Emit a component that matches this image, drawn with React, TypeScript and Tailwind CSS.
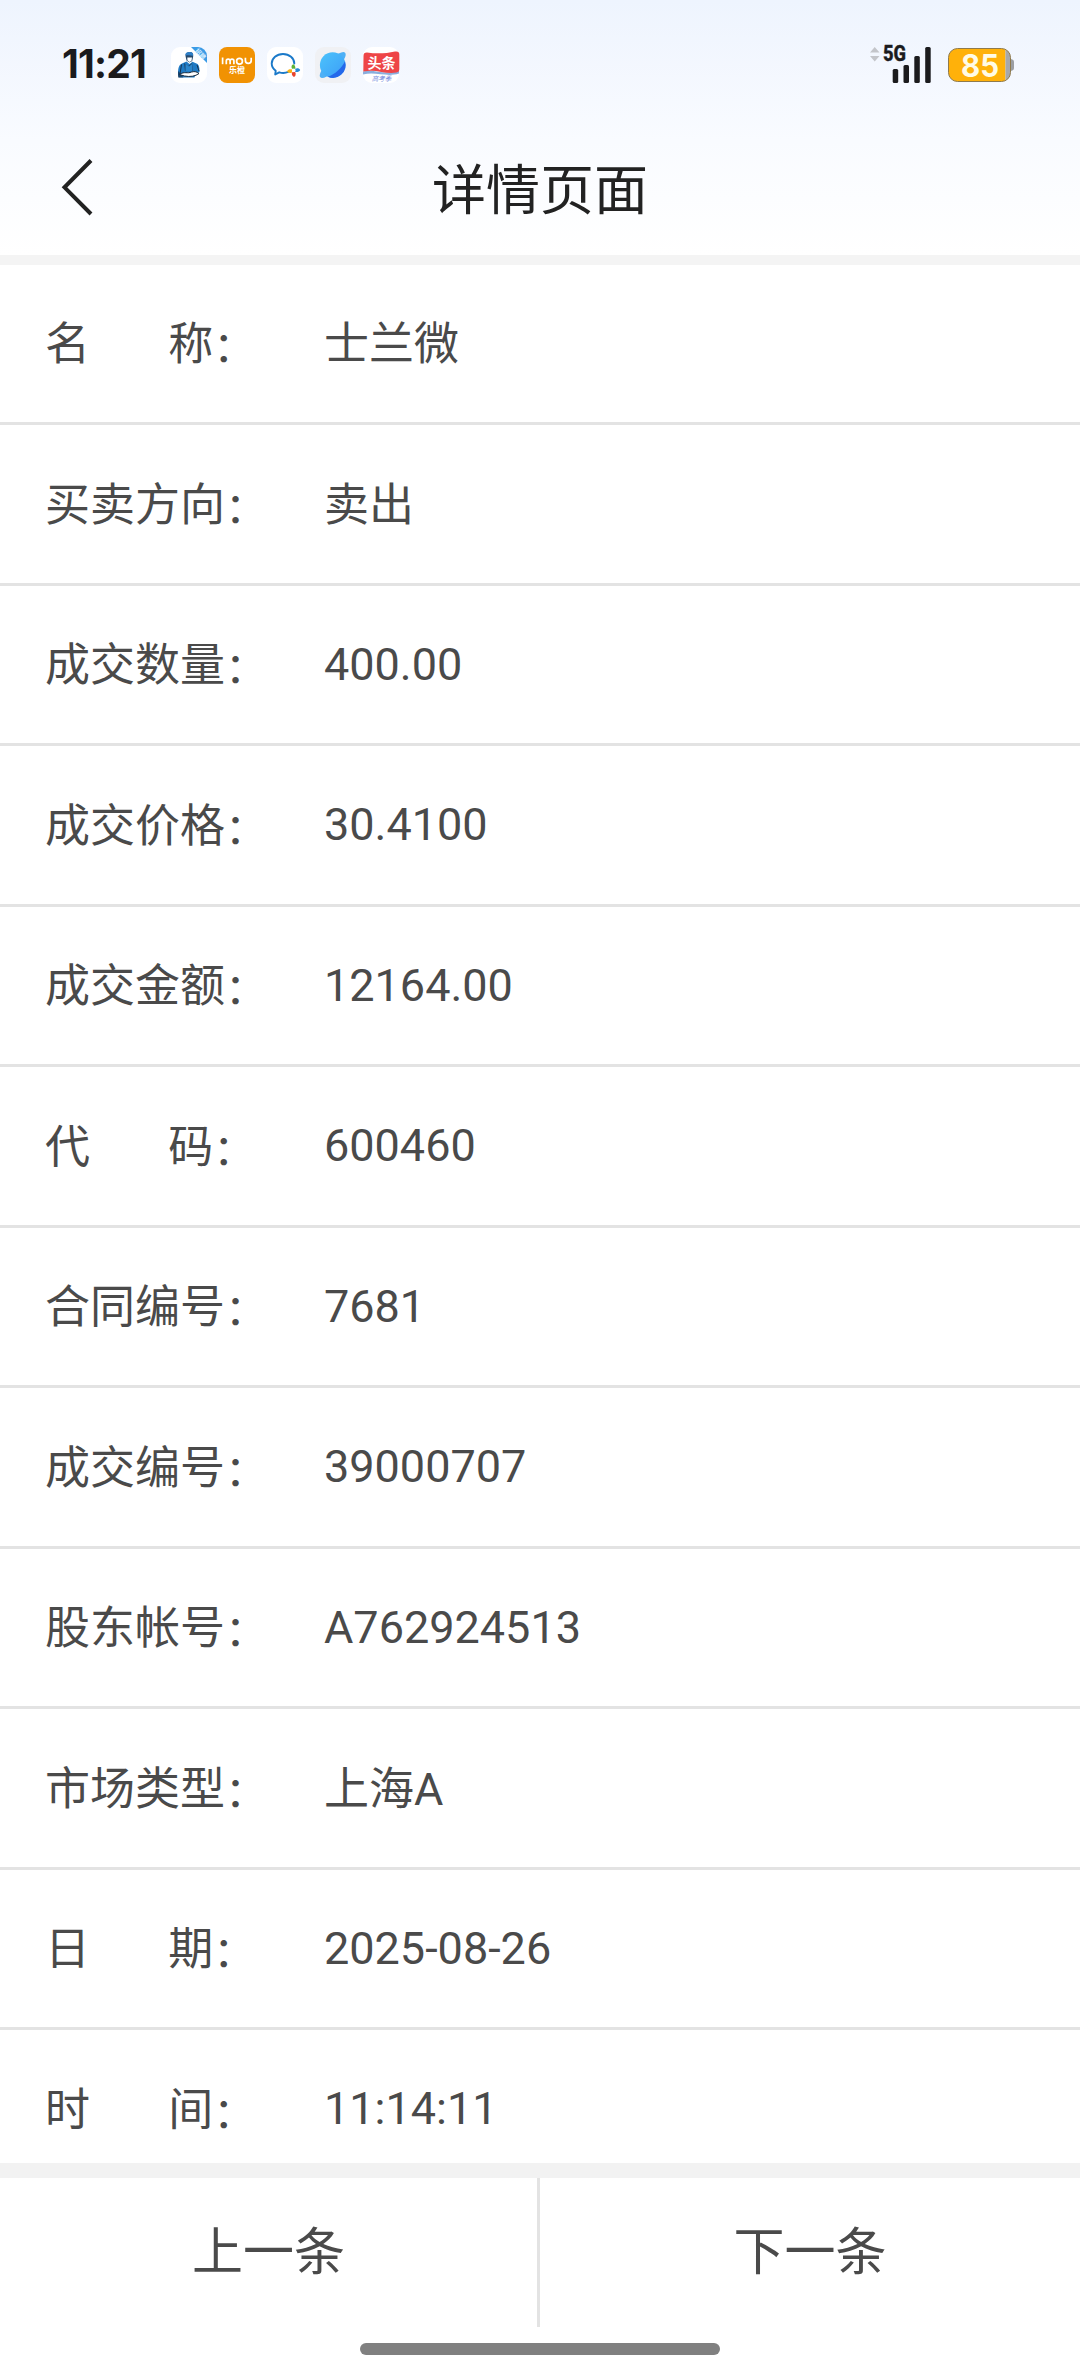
import { clsx } from "clsx";

type Field = { label: string; value: string };

// short labels are padded so that the colons sit near the four-character ones
const GAP = "\u00a0".repeat(7);

const fields: Field[] = [
    { label: `名${GAP}称`, value: "士兰微" },
    { label: "买卖方向", value: "卖出" },
    { label: "成交数量", value: "400.00" },
    { label: "成交价格", value: "30.4100" },
    { label: "成交金额", value: "12164.00" },
    { label: `代${GAP}码`, value: "600460" },
    { label: "合同编号", value: "7681" },
    { label: "成交编号", value: "39000707" },
    { label: "股东帐号", value: "A762924513" },
    { label: "市场类型", value: "上海A" },
    { label: `日${GAP}期`, value: "2025-08-26" },
    { label: `时${GAP}间`, value: "11:14:11" },
];

function WorkerIcon() {
    return (
        <svg width="36" height="36" viewBox="0 0 36 36" className="overflow-visible">
            <rect width="36" height="36" rx="9" fill="#fff" />
            <path d="M20 0H27a9 9 0 0 1 9 9V16Z" fill="#3b9be6" />
            <text x="29.500" y="9" fontSize="6" fontWeight="700" fill="#d8efff" transform="rotate(45 29.500 7)" textAnchor="middle">
                招聘
            </text>
            <path d="M14.500 9c0-3 2-4 4.500-3.900 2.600.1 3.500 1.600 3.200 4.200l-1 4.700-2.700 1.500-3-2Z" fill="#27496b" />
            <path d="M16.300 10.500h4.700l-.5 3.300-2 1.200-2-1.400Z" fill="#fff" />
            <path d="M14.300 8.500c0-3 2-3.600 4.700-3.400 2.400.2 3.600 1.500 3 3.600-3-.7-5-.7-7.700-.2Z" fill="#2f7fc6" />
            <path d="M7 28c0-6 .5-10 4-11.500l4.500-2 3 2.500 3-2.200 4.500 2c2.500 1.300 2.500 5 2.500 8.200l-4 2-1 3.500H8Z" fill="#1f7ac4" />
            <path d="M7 24v6.500h5.500L9 26ZM13 16l4 3 4-3 1 8h-8Z" fill="#17324f" opacity=".7" />
            <path d="M14.500 17l3.500 2.500 3-2.500.5 7h-7Z" fill="#2b86cc" />
            <path d="M10.500 17.500 9 27M26 18l2 6" stroke="#17324f" strokeWidth="1" />
            <path d="M8.500 27.500c5-3.500 8-.5 12-2.500 3.500-1 5.500 0 7.500 1.500-3.500 2.800-9 3.600-14.500 2.500Z" fill="#fff" stroke="#17293c" strokeWidth="1" />
        </svg>
    );
}

function ImouIcon() {
    return (
        <svg width="36" height="36" viewBox="0 0 36 36">
            <rect width="36" height="36" rx="8" fill="#f19203" />
            <g fill="none" stroke="#fff" strokeWidth="1.700">
                <path d="M3.600 10.500v6.700" />
                <path d="M7.300 17.200v-3.200a1.900 1.900 0 0 1 3.800 0v3.200M11.100 14a1.900 1.900 0 0 1 3.800 0v3.200" />
                <circle cx="20.500" cy="14.200" r="2.900" />
                <path d="M26.400 10.800v2.700a2.900 2.900 0 0 0 5.800 0v-2.700" />
            </g>
            <text x="18" y="25.500" fontSize="8" fontWeight="700" fill="#fff" textAnchor="middle">
                乐橙
            </text>
        </svg>
    );
}

function WeComIcon() {
    return (
        <svg width="36" height="36" viewBox="0 0 36 36">
            <rect width="36" height="36" rx="9" fill="#fff" />
            <path
                d="M27.300 16.500c0-5.200-5-9.500-11.300-9.500S4.700 11.300 4.700 16.600c0 3 1.600 5.400 4 7.200l-.5 3.700 4-2.200c3 .9 6.300.8 9-.4"
                fill="none"
                stroke="#1a79c9"
                strokeWidth="1.900"
                strokeLinecap="round"
                strokeLinejoin="round"
            />
            <path d="M25 21.800c-1-2.200-.5-3.900 1.300-4.500 1.700 1 2.200 2.600 2 4.400Z" fill="#5fb336" />
            <path d="M28.300 21.700c2-1 4.100-.5 4.900 1.300-.9 1.900-2.900 2.400-5 1.900Z" fill="#2489d6" />
            <path d="M28.200 24.900c1 2.200.5 4.300-1.300 5.100-1.800-1-2.400-2.700-1.900-4.700Z" fill="#e8452c" />
            <path d="M25 25.500c-2 1-4.200.5-5-1.200.9-1.900 2.900-2.400 5-1.900Z" fill="#f9b213" />
            <circle cx="26.700" cy="23.400" r="1.700" fill="#fff" />
        </svg>
    );
}

function PlanetIcon() {
    return (
        <svg width="36" height="36" viewBox="0 0 36 36">
            <defs>
                <linearGradient id="planet" x1="0" y1="0" x2="1" y2="1">
                    <stop offset="0" stopColor="#4cc3fb" />
                    <stop offset="1" stopColor="#3c9df8" />
                </linearGradient>
            </defs>
            <rect width="36" height="36" rx="9" fill="#f0f1f4" />
            <ellipse cx="17.700" cy="18" rx="17.500" ry="5.500" transform="rotate(-45 17.700 18)" fill="#4fb0f5" />
            <circle cx="17.700" cy="18" r="12.800" fill="url(#planet)" />
            <path d="M30 14.300A12.800 12.800 0 0 1 12.700 29.800C20.200 27.500 26.200 21.500 30 14.300Z" fill="#2468ea" />
        </svg>
    );
}

function ToutiaoIcon() {
    return (
        <svg width="36" height="36" viewBox="0 0 36 36" className="overflow-visible">
            <clipPath id="tile">
                <rect width="36" height="36" rx="9" />
            </clipPath>
            <g clipPath="url(#tile)">
                <rect width="36" height="36" fill="#fff" />
                <path d="M0 24.500c12-3 22 5 36-1.500v3.500c-12 4-23-2-36 1Z" fill="#8aaedd" />
            </g>
            <path d="M.5 9C.5 6.500 1.500 5.500 4 5.500 14 7 23 6.500 32 4.500c3-.5 4.300.5 4.300 3V22c0 2-.8 3.200-3 3.500-11 2.200-20-4-33-1Z" fill="#ee4547" />
            <text x="18.500" y="21" fontSize="14" fontWeight="700" fill="#fff" textAnchor="middle">
                头条
            </text>
            <text x="18.500" y="34" fontSize="6.500" fill="#6f86dc" textAnchor="middle" fontStyle="italic">
                高考季
            </text>
        </svg>
    );
}

function SignalIcon() {
    return (
        <svg width="64" height="38" viewBox="0 0 64 38" className="overflow-visible">
            <path d="M4.700 1 9.500 6.500H0ZM4.700 15.500 0 10H9.500Z" fill="#c3c5ca" />
            <g fill="#1b1b1d">
                <rect x="22.700" y="23" width="5.500" height="14" rx="1.500" />
                <rect x="33.500" y="19" width="5.500" height="18" rx="1.500" />
                <rect x="44.300" y="10" width="5.500" height="27" rx="1.500" />
                <rect x="55.200" y="1" width="5.500" height="36" rx="1.500" />
            </g>
            <text
                x="13"
                y="15.300"
                className="font-[Roboto]"
                fontSize="22"
                fontWeight="800"
                fill="#1b1b1d"
                stroke="#1b1b1d"
                strokeWidth=".4"
                textLength="23"
                lengthAdjust="spacingAndGlyphs"
            >
                5G
            </text>
        </svg>
    );
}

function BatteryIcon() {
    return (
        <svg width="68" height="36" viewBox="0 0 68 36" className="overflow-visible">
            <path d="M62 12c3 .2 4 1.200 4 3v6c0 1.800-1 2.800-4 3Z" fill="#9b9ea3" />
            <clipPath id="cell">
                <rect x=".5" y="1.500" width="62" height="33" rx="9" />
            </clipPath>
            <g clipPath="url(#cell)">
                <rect width="57.500" height="36" fill="#ffb10a" />
                <rect x="57.500" width="8" height="36" fill="#a6a8ac" />
            </g>
            <rect x=".5" y="1.500" width="62" height="33" rx="9" fill="none" stroke="#8f7a4c" />
            <text x="32" y="29.500" className="font-[Inter]" fontSize="31" fontWeight="700" fill="#fffbe6" textAnchor="middle" textLength="38" lengthAdjust="spacingAndGlyphs">
                85
            </text>
        </svg>
    );
}

function StatusBar() {
    return (
        <div className="flex h-32 items-center justify-between pr-[64px] pl-[62px]">
            <div className="flex items-center pt-[2px]">
                <span className="w-[109px] pb-[3px] font-[Inter] text-[39px] leading-none font-bold tracking-[-0.8px] text-[#1b1b1d]">11:21</span>
                <div className="flex gap-3">
                    <WorkerIcon />
                    <ImouIcon />
                    <WeComIcon />
                    <PlanetIcon />
                    <ToutiaoIcon />
                </div>
            </div>
            <div className="flex items-center gap-[14px] pt-[2px]">
                <SignalIcon />
                <BatteryIcon />
            </div>
        </div>
    );
}

function TitleBar() {
    return (
        <div className="grid h-[127px] grid-cols-[1fr_auto_1fr] items-center">
            <button className="pb-2 pl-[60px]" aria-label="返回">
                <svg width="36" height="62" viewBox="0 0 36 62" fill="none" stroke="#222" strokeWidth="4">
                    <path d="M31 3.500 4.500 30.300 31 57" />
                </svg>
            </button>
            <h1 className="text-[54px] leading-none text-[#222]">详情页面</h1>
        </div>
    );
}

function FieldRow({ label, value }: Field) {
    // Chinese glyphs sit a little high next to the Roboto digits
    const isChinese = /^[\u4e00-\u9fa5]/.test(value);

    return (
        <li className="flex h-[160.48px] shrink-0 items-center border-b-[3px] border-[#e3e3e3] pl-[45px] text-[45px] text-[#4a4a4a]">
            <span className="w-[279px] pt-[3px] whitespace-nowrap">
                {label}
                <span className="inline-block translate-y-[2px] text-[42px] leading-none">：</span>
            </span>
            <span className={clsx(isChinese && "pt-[3px]")}>{value}</span>
        </li>
    );
}

export default function App() {
    return (
        <div className="flex h-[2376px] w-[1080px] flex-col overflow-hidden bg-white font-[Roboto,'Noto_Sans_CJK_SC',sans-serif]">
            <header className="h-[255px] shrink-0 bg-linear-to-b from-[#eef4fe] via-[#f9fbff] via-55% to-white">
                <StatusBar />
                <TitleBar />
            </header>

            <ul className="flex h-[1908px] shrink-0 flex-col overflow-hidden border-t-10 border-[#f4f4f4]">
                {fields.map((field) => (
                    <FieldRow key={field.label} {...field} />
                ))}
            </ul>

            <div className="grid h-[164px] shrink-0 grid-cols-2 border-t-[15px] border-[#f2f2f2]">
                <button className="border-r-[3px] border-[#e3e3e3] text-[51px] leading-none text-[#4a4a4a]">上一条</button>
                <button className="text-[51px] leading-none text-[#4a4a4a]">下一条</button>
            </div>

            {/* Gesture bar */}
            <div className="mx-auto mt-4 h-3 w-[360px] rounded-full bg-[#808080]" />
        </div>
    );
}
